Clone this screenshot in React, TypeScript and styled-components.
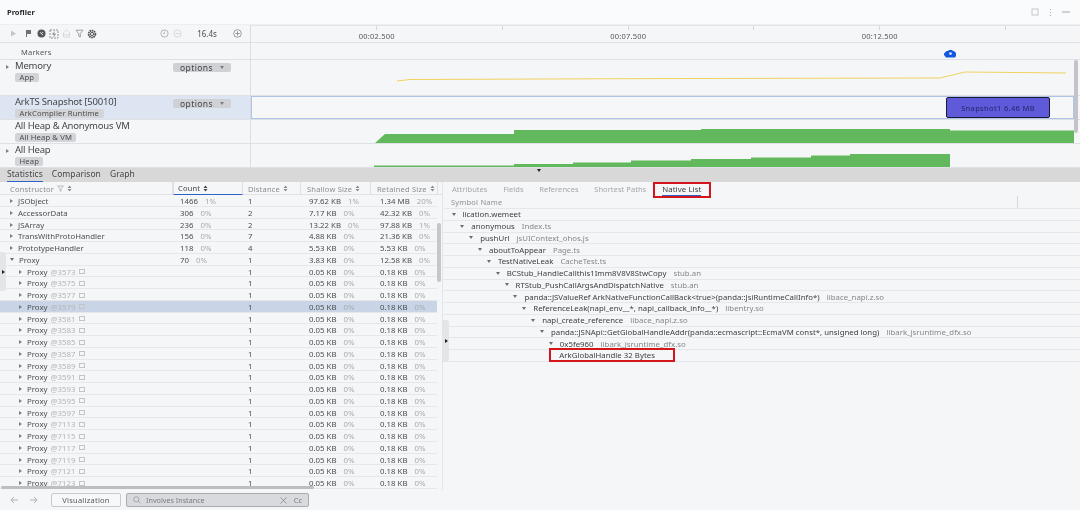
import React from "react";
import styled, { createGlobalStyle } from "styled-components";

const Global = createGlobalStyle`
  html, body { margin: 0; padding: 0; background: #f5f6f8; }
  * { box-sizing: border-box; }
  body { font-family: "Noto Sans", "Liberation Sans", sans-serif; color: #3a3c40; }
`;

const Page = styled.div`
  width: 1080px; height: 510px; overflow: hidden; display: flex; flex-direction: column;
  background: #f5f6f8; position: relative; filter: blur(0.35px);
`;
const TitleBar = styled.div`
  height: 25px; flex: none; display: flex; align-items: center; justify-content: space-between;
  padding: 0 10px 0 7px; background: #fafbfc; border-bottom: 1px solid #eceef0;
`;
const Title = styled.div`font-size: 7.5px; font-weight: 700; color: #26282c; margin-top: -1px;`;
const WindowIcons = styled.div`display: flex; align-items: center; gap: 10px; color: #9a9ca0;`;

const Row = styled.div<{ $h: number; $active?: boolean }>`
  height: ${p => p.$h}px; flex: none; display: flex; border-bottom: 1px solid #dfe0e3;
  ${p => p.$active ? "background: linear-gradient(to right, #dde5f3 250px, #f5f6f8 250px);" : ""}
`;
const LeftCell = styled.div`
  width: 251px; flex: none; border-right: 1px solid #dcdde1; position: relative;
  display: flex; flex-direction: column; align-items: flex-start; padding-left: 15px;
`;
const ToolCell = styled(LeftCell)`flex-direction: row; align-items: center; padding-left: 9px;`;
const ToolGroup = styled.div`display: flex; align-items: center; gap: 3px;`;
const TimeGroup = styled.div`display: flex; align-items: center; margin-left: 63px; color: #a4a6aa;`;
const TimeText = styled.span`font-size: 8px; color: #4a4c50; width: 44px; text-align: center; margin-left: 3px; margin-right: 4px;`;
const Ruler = styled.div`
  flex: 1; display: flex; align-items: flex-end; padding-left: 0;
  background: repeating-linear-gradient(to right, #d4d5d8 0, #d4d5d8 1px, transparent 1px, transparent 125.75px) 125px 0 / auto 4px no-repeat;
  border-top: 1px solid #e3e4e7;
`;
const RulerCell = styled.div`width: 251.5px; flex: none; text-align: center; font-size: 7.5px; letter-spacing: 0.2px; color: #55575b; line-height: 11px;`;
const MarkerLabel = styled.div`font-size: 7.5px; color: #55575b; margin: 4px 0 0 6px; line-height: 11px; letter-spacing: 0.2px;`;
const TrackTitle = styled.div`font-size: 9.5px; line-height: 12px; color: #44464a; letter-spacing: -0.2px; white-space: nowrap;`;
const Badge = styled.span`
  font-size: 7.7px; line-height: 9px; height: 9px; padding: 0 4.5px; background: #d3d4d7; border-radius: 2px;
  color: #4a4c50; letter-spacing: 0.1px; margin-top: 1px; white-space: nowrap;
`;
const OptionsBtn = styled.div`
  position: absolute; left: 173px; top: 3px; width: 58px; height: 9px; border-radius: 2px; background: #cfd1d5;
  display: flex; align-items: center; justify-content: center; gap: 7px;
  font-size: 8.5px; letter-spacing: 0.4px; color: #44464a;
`;
const Expander = styled.span`position: absolute; left: 6px; top: 5px; width: 0; height: 0;
  border-left: 3.5px solid #7d7f83; border-top: 2.5px solid transparent; border-bottom: 2.5px solid transparent;`;
const Caret = styled.span`width: 0; height: 0; border-top: 3px solid #7a7c80; border-left: 2.5px solid transparent; border-right: 2.5px solid transparent;`;
const Canvas = styled.div`flex: 1; position: relative; display: flex; min-width: 0;`;
const MarkerCanvas = styled(Canvas)`justify-content: flex-end; align-items: center; padding: 5px 124px 0 0;`;
const Selection = styled(Canvas)`justify-content: flex-end; padding-right: 23px; margin-right: 6px; border: 1px solid #adc3ea; background: #f6f7f9;`;
const SnapshotBox = styled.div`
  width: 104px; background: #5e5ada; border: 1px solid #1b1b2e; border-radius: 2px;
  font-size: 7.5px; letter-spacing: 0.35px; color: #24246b; display: flex; align-items: center; justify-content: center;
`;
const Chart = styled.svg`width: 829px; flex: none; display: block;`;
const TopScroll = styled.div`position: absolute; left: 1074px; top: 60px; width: 4px; height: 73px; background: #c3c4c7; border-radius: 2px;`;

const TabBar = styled.div`
  height: 14px; flex: none; background: #d8d8d9; display: flex; align-items: flex-end; padding-left: 7px; gap: 9px; position: relative;
`;
const MainTab = styled.div<{ $on?: boolean }>`
  font-size: 8.5px; line-height: 12px; height: 14px; color: #45474b; letter-spacing: 0.05px;
  border-bottom: ${p => p.$on ? "1px solid #2f62c8" : "1px solid transparent"};
`;
const Collapse = styled.span`position: absolute; left: 537px; top: 1px; width: 0; height: 0;
  border-top: 3px solid #222; border-left: 2.5px solid transparent; border-right: 2.5px solid transparent;`;

const Split = styled.div`flex: 1; min-height: 0; display: flex; position: relative;`;
const Left = styled.div`width: 443px; flex: none; display: flex; flex-direction: column; position: relative; overflow: hidden; border-right: 1px solid #e4e5e8;`;
const Right = styled.div`flex: 1; display: flex; flex-direction: column; min-width: 0;`;

const cols = "173px 70px 58px 70px 67px";
const THead = styled.div`
  height: 13px; flex: none; display: grid; grid-template-columns: ${cols}; border-bottom: 1px solid #e1e2e5; background: #f5f6f8;
`;
const TH = styled.div<{ $on?: boolean; $pad: number }>`
  font-size: 7.5px; line-height: 12px; padding-left: ${p => p.$pad}px; letter-spacing: 0.2px;
  color: ${p => p.$on ? "#44464a" : "#8b8d91"}; display: flex; align-items: center; gap: 3px;
  border-right: 1px solid #dfe0e3;
  ${p => p.$on ? "border-bottom: 1px solid #2f62c8; border-left: 1px solid #dfe0e3; height: 13px;" : ""}
`;
const TRow = styled.div<{ $sel?: boolean }>`
  height: 11.75px; flex: none; display: grid; grid-template-columns: ${cols}; width: 437px; align-items: center;
  border-bottom: 1px solid #e6e7ea; background: ${p => p.$sel ? "#c9d5e7" : "transparent"};
  font-size: 7.8px; letter-spacing: 0.02px; color: #4c4e52; white-space: nowrap; padding-top: 1px;
`;
const NameCell = styled.div<{ $level: number }>`padding-left: ${p => 10 + p.$level * 9}px; display: flex; align-items: center; gap: 5px;`;
const Tri = styled.span`width: 0; height: 0; border-left: 3px solid #7d7f83; border-top: 2.2px solid transparent; border-bottom: 2.2px solid transparent; margin-right: 0;`;
const TriDown = styled.span`width: 0; height: 0; border-top: 3px solid #6a6c70; border-left: 2.2px solid transparent; border-right: 2.2px solid transparent;`;
const Id = styled.span`color: #b3b5b9; margin-left: -2px;`;
const Frame = styled.span`width: 6px; height: 5px; border: 1px solid #c2c4c8; border-top-width: 1.5px; margin-left: -2px;`;
const Val = styled.div<{ $pad: number }>`padding-left: ${p => p.$pad}px; display: flex; gap: 7px;`;
const Pct = styled.span`color: #a8aaae;`;
const VScroll = styled.div`position: absolute; left: 437px; top: 41px; width: 4px; height: 59px; border-radius: 2px; background: #c6c7ca;`;
const HScroll = styled.div`position: absolute; left: 1px; top: 304px; width: 313px; height: 3px; border-radius: 2px; background: #bdbec1;`;
const SideHandle = styled.div`position: absolute; width: 6px; height: 39px; background: #e4e5e8; border-radius: 0 3px 3px 0; display: flex; align-items: center; justify-content: center;`;
const LeftHandle = styled(SideHandle)`left: 0; top: 70px;`;
const MidHandle = styled(SideHandle)`left: 443px; top: 138px; height: 42px;`;
const HandleArrow = styled.span`width: 0; height: 0; border-left: 3px solid #1f2023; border-top: 2.2px solid transparent; border-bottom: 2.2px solid transparent;`;

const RTabs = styled.div`height: 14px; flex: none; display: flex; align-items: center; padding-left: 9px; gap: 15.6px;`;
const RTab = styled.div`font-size: 7.5px; letter-spacing: 0.05px; color: #a4a6aa; line-height: 12px;`;
const RTabOn = styled.div`
  width: 58px; height: 16px; border: 2px solid #d4161c; margin-left: -9px; margin-top: 1px;
  display: flex; justify-content: center; font-size: 7.8px; letter-spacing: 0.1px; color: #3c3e42; position: relative; z-index: 1; line-height: 11px;
`;
const TabUnder = styled.span`border-bottom: 1px solid #2f62c8; height: 12px;`;
const SymHead = styled.div`
  height: 13px; flex: none; margin-left: 1px; font-size: 7.5px; color: #8f9195; letter-spacing: 0.2px; padding-left: 7px; display: flex; align-items: center;
  border-bottom: 1px solid #e6e7ea; position: relative; line-height: 11px;
`;
const SymDivider = styled.span`position: absolute; left: 573px; top: 0; height: 12px; width: 1px; background: #d8d9dc;`;
const SRow = styled.div<{ $level: number }>`
  height: 11.75px; flex: none; display: flex; align-items: center; gap: 7px; padding-left: ${p => 8.5 + p.$level * 8.85}px;
  border-bottom: 1px solid #e6e7ea; font-size: 7.8px; letter-spacing: 0.02px; color: #3e4044; white-space: nowrap;
`;
const Lib = styled.span`color: #85878b; margin-left: 0;`;
const Boxed = styled.span`
  border: 2px solid #d4161c; height: 14px; width: 126px; display: flex; align-items: center; padding-left: 8px; margin-left: 0.5px;
  position: relative; z-index: 1; background: #f5f6f8;
`;

const Bottom = styled.div`
  height: 20px; flex: none; display: flex; align-items: center; padding-left: 10px; margin-top: auto; color: #a8aaae; background: #f5f6f8;
`;
const NavIcons = styled.div`display: flex; gap: 12px; margin-right: 13px;`;
const VizBtn = styled.div`
  width: 70px; height: 14px; border: 1px solid #c9cacd; border-radius: 2px; background: #f7f8f9; font-size: 7.5px; letter-spacing: 0.25px;
  color: #55575b; display: flex; align-items: center; justify-content: center;
`;
const Search = styled.div`
  width: 183px; height: 14px; margin-left: 5px; border: 1px solid #a9abae; border-radius: 2px; background: #d9dadd;
  display: flex; align-items: center; padding: 0 6px; font-size: 7.2px; color: #7a7c80; gap: 5px;
`;
const SearchText = styled.span`flex: 1;`;
const CaseToggle = styled.span`margin-left: 2px; font-size: 7.5px;`;

const Ic = styled.svg`display: block; flex: none;`;

const ToolIcons = () => (
  <ToolGroup>
    <Ic width="9" height="9" viewBox="0 0 9 9"><path d="M2 1.5v6l5-3z" fill="#c4c6c9" /></Ic>
    <Ic width="9" height="9" viewBox="0 0 9 9" style={{ marginLeft: 3 }}><path d="M2 1h5v4H3v3H2z" fill="#6e7074" /></Ic>
    <Ic width="9" height="9" viewBox="0 0 9 9" style={{ marginLeft: 1 }}><circle cx="4.5" cy="4.5" r="4" fill="#55575b" /><path d="M3 3.2l3 3M6 3.2l-1 1" stroke="#eee" strokeWidth="1" /></Ic>
    <Ic width="10" height="10" viewBox="0 0 10 10"><path d="M1 1h8v8H1z" fill="none" stroke="#77797d" strokeWidth=".8" strokeDasharray="2 1" /><path d="M3 5h4M5.5 2.5L4 5l2 .5L4.5 8" stroke="#77797d" strokeWidth=".7" fill="none" /></Ic>
    <Ic width="9" height="9" viewBox="0 0 9 9"><path d="M.8 4.5L4.5 1l3.7 3.5M1.5 4v4.2h6V4M1.5 6h6" stroke="#d0d2d5" strokeWidth=".8" fill="none" /></Ic>
    <Ic width="9" height="9" viewBox="0 0 9 9" style={{ marginLeft: 1 }}><path d="M1 1.2h7L5.3 4.6V8L3.7 7.2V4.6z" stroke="#8a8c90" strokeWidth=".8" fill="none" /></Ic>
    <Ic width="10" height="10" viewBox="0 0 10 10"><circle cx="5" cy="5" r="3.4" fill="none" stroke="#505256" strokeWidth="1.8" strokeDasharray="1.6 .6" /><circle cx="5" cy="5" r="1.6" fill="none" stroke="#505256" strokeWidth="1" /></Ic>
  </ToolGroup>
);

const tree: [number, string, string?][] = [
  [0, "lication.wemeet"],
  [1, "anonymous", "Index.ts"],
  [2, "pushUrl", "jsUIContext_ohos.js"],
  [3, "aboutToAppear", "Page.ts"],
  [4, "TestNativeLeak", "CacheTest.ts"],
  [5, "BCStub_HandleCallthis1Imm8V8V8StwCopy", "stub.an"],
  [6, "RTStub_PushCallArgsAndDispatchNative", "stub.an"],
  [7, "panda::JSValueRef ArkNativeFunctionCallBack<true>(panda::JsiRuntimeCallInfo*)", "libace_napi.z.so"],
  [8, "ReferenceLeak(napi_env__*, napi_callback_info__*)", "libentry.so"],
  [9, "napi_create_reference", "libace_napi.z.so"],
  [10, "panda::JSNApi::GetGlobalHandleAddr(panda::ecmascript::EcmaVM const*, unsigned long)", "libark_jsruntime_dfx.so"],
  [11, "0x5fe960", "libark_jsruntime_dfx.so"],
];

const top: [string, string, string, string, string, string, string, string, string][] = [
  ["JSObject", "1466", "1%", "1", "97.62 KB", "1%", "1.34 MB", "20%", ""],
  ["AccessorData", "306", "0%", "2", "7.17 KB", "0%", "42.32 KB", "0%", ""],
  ["JSArray", "236", "0%", "2", "13.22 KB", "0%", "97.88 KB", "1%", ""],
  ["TransWithProtoHandler", "156", "0%", "7", "4.88 KB", "0%", "21.36 KB", "0%", ""],
  ["PrototypeHandler", "118", "0%", "4", "5.53 KB", "0%", "5.53 KB", "0%", ""],
  ["Proxy", "70", "0%", "1", "3.83 KB", "0%", "12.58 KB", "0%", "open"],
];
const ids = [3573, 3575, 3577, 3579, 3581, 3583, 3585, 3587, 3589, 3591, 3593, 3595, 3597, 7113, 7115, 7117, 7119, 7121, 7123];

const Sort = () => (
  <Ic width="5" height="7" viewBox="0 0 5 7"><path d="M2.5 .5L4.5 3H.5zM2.5 6.5L.5 4h4z" fill="currentColor" /></Ic>
);

export default function App() {
  return (
    <Page>
      <Global />
      <TitleBar>
        <Title>Profiler</Title>
        <WindowIcons>
          <Ic width="8" height="8" viewBox="0 0 8 8"><rect x="1" y="1" width="6" height="6" fill="none" stroke="#c4c6c9" /></Ic>
          <Ic width="3" height="9" viewBox="0 0 3 9"><path d="M1.5 1v.8M1.5 4v.8M1.5 7v.8" stroke="#9a9ca0" strokeWidth="1.1" /></Ic>
          <Ic width="8" height="8" viewBox="0 0 8 8"><path d="M0 4h8" stroke="#a4a6aa" /></Ic>
        </WindowIcons>
      </TitleBar>

      <Row $h={18}>
        <ToolCell>
          <ToolIcons />
          <TimeGroup>
            <Ic width="9" height="9" viewBox="0 0 9 9"><circle cx="4.5" cy="4.5" r="3.6" fill="none" stroke="#a4a6aa" strokeWidth=".8" /><path d="M4.5 2.5v2h-1.5" stroke="#a4a6aa" strokeWidth=".7" fill="none" /></Ic>
            <Ic width="9" height="9" viewBox="0 0 9 9" style={{ marginLeft: 4 }}><circle cx="4.5" cy="4.5" r="3.6" fill="none" stroke="#cfd1d4" strokeWidth=".8" /><path d="M2.5 4.5h4" stroke="#cfd1d4" strokeWidth=".8" /></Ic>
            <TimeText>16.4s</TimeText>
            <Ic width="9" height="9" viewBox="0 0 9 9"><circle cx="4.5" cy="4.5" r="3.8" fill="none" stroke="#85878b" strokeWidth=".8" /><path d="M2.3 4.5h4.4M4.5 2.3v4.4" stroke="#85878b" strokeWidth=".8" /></Ic>
          </TimeGroup>
        </ToolCell>
        <Ruler>
          <RulerCell>00:02.500</RulerCell>
          <RulerCell>00:07.500</RulerCell>
          <RulerCell>00:12.500</RulerCell>
        </Ruler>
      </Row>

      <Row $h={17}>
        <LeftCell><MarkerLabel>Markers</MarkerLabel></LeftCell>
        <MarkerCanvas>
          <Ic width="12" height="8" viewBox="0 0 12 8"><path d="M0 3.5L2.5 1h1.5l1-1h3l1 1h1L12 3v3l-1 1.5H2L0 5z" fill="#1558e0" /><circle cx="6.5" cy="3.6" r="1.4" fill="#cfe0fb" /></Ic>
        </MarkerCanvas>
      </Row>

      <Row $h={36}>
        <LeftCell>
          <Expander />
          <TrackTitle>Memory</TrackTitle>
          <Badge>App</Badge>
          <OptionsBtn>options <Caret /></OptionsBtn>
        </LeftCell>
        <Canvas>
          <Chart height="35" viewBox="0 0 829 35">
            <path d="M146 21L159 19.5L400 18.6L689 18L714 12L815 13" fill="none" stroke="#f0d25e" strokeWidth="1" />
          </Chart>
        </Canvas>
      </Row>

      <Row $h={24} $active>
        <LeftCell>
          <TrackTitle>ArkTS Snapshot [50010]</TrackTitle>
          <Badge>ArkCompiler Runtime</Badge>
          <OptionsBtn>options <Caret /></OptionsBtn>
        </LeftCell>
        <Selection>
          <SnapshotBox>Snapshot1 6.46 MB</SnapshotBox>
        </Selection>
      </Row>

      <Row $h={24}>
        <LeftCell>
          <TrackTitle>All Heap &amp; Anonymous VM</TrackTitle>
          <Badge>All Heap &amp; VM</Badge>
        </LeftCell>
        <Canvas>
          <Chart height="23" viewBox="0 0 829 23">
            <path d="M124 23L134 14H263V10H450V9H699V10.5H823V23z" fill="#62b85c" />
          </Chart>
        </Canvas>
      </Row>

      <Row $h={24}>
        <LeftCell>
          <Expander />
          <TrackTitle>All Heap</TrackTitle>
          <Badge>Heap</Badge>
        </LeftCell>
        <Canvas>
          <Chart height="23" viewBox="0 0 829 23">
            <path d="M123 23V21.5H263V20H322V18.5H380V16.5H440V15H500V13.5H560V11.5H599V10H699V23z" fill="#62b85c" />
          </Chart>
        </Canvas>
      </Row>

      <TabBar>
        <MainTab $on>Statistics</MainTab>
        <MainTab>Comparison</MainTab>
        <MainTab>Graph</MainTab>
        <Collapse />
      </TabBar>

      <Split>
        <Left>
          <THead>
            <TH $pad={10}>Constructor
              <Ic width="7" height="7" viewBox="0 0 7 7"><path d="M.5 1h6L4 3.6V6.4L3 5.8V3.6z" fill="none" stroke="#9a9ca0" strokeWidth=".6" /></Ic>
              <Sort />
            </TH>
            <TH $pad={4} $on>Count <Sort /></TH>
            <TH $pad={5}>Distance <Sort /></TH>
            <TH $pad={6}>Shallow Size <Sort /></TH>
            <TH $pad={6}>Retained Size <Sort /></TH>
          </THead>
          {top.map(r => (
            <TRow key={r[0]}>
              <NameCell $level={0}>{r[8] ? <TriDown /> : <Tri />}{r[0]}</NameCell>
              <Val $pad={7}>{r[1]} <Pct>{r[2]}</Pct></Val>
              <Val $pad={5}>{r[3]}</Val>
              <Val $pad={8}>{r[4]} <Pct>{r[5]}</Pct></Val>
              <Val $pad={9}>{r[6]} <Pct>{r[7]}</Pct></Val>
            </TRow>
          ))}
          {ids.map(id => (
            <TRow key={id} $sel={id === 3579}>
              <NameCell $level={1}><Tri />Proxy <Id>@{id}</Id><Frame /></NameCell>
              <div />
              <Val $pad={5}>1</Val>
              <Val $pad={8}>0.05 KB <Pct>0%</Pct></Val>
              <Val $pad={9}>0.18 KB <Pct>0%</Pct></Val>
            </TRow>
          ))}
          <VScroll />
          <HScroll />
          <LeftHandle><HandleArrow /></LeftHandle>
        </Left>
        <MidHandle><HandleArrow /></MidHandle>
        <Right>
          <RTabs>
            <RTab>Attributes</RTab>
            <RTab>Fields</RTab>
            <RTab>References</RTab>
            <RTab>Shortest Paths</RTab>
            <RTabOn><TabUnder>Native List</TabUnder></RTabOn>
          </RTabs>
          <SymHead>Symbol Name<SymDivider /></SymHead>
          {tree.map(([lvl, name, lib]) => (
            <SRow key={name} $level={lvl}>
              <TriDown />{name}{lib ? <Lib>{lib}</Lib> : null}
            </SRow>
          ))}
          <SRow $level={11}><Boxed>ArkGlobalHandle 32 Bytes</Boxed></SRow>
        </Right>
      </Split>

      <Bottom>
        <NavIcons>
          <Ic width="8" height="8" viewBox="0 0 8 8"><path d="M8 4H1M4 1L1 4l3 3" fill="none" stroke="#b0b2b6" /></Ic>
          <Ic width="8" height="8" viewBox="0 0 8 8"><path d="M0 4h7M4 1l3 3-3 3" fill="none" stroke="#b0b2b6" /></Ic>
        </NavIcons>
        <VizBtn>Visualization</VizBtn>
        <Search>
          <Ic width="8" height="8" viewBox="0 0 8 8"><circle cx="3.3" cy="3.3" r="2.6" fill="none" stroke="#8f9195" strokeWidth=".7" /><path d="M5.2 5.2L7.5 7.5" stroke="#8f9195" strokeWidth=".7" /></Ic>
          <SearchText>Involves Instance</SearchText>
          <Ic width="7" height="7" viewBox="0 0 7 7"><path d="M.5.5l6 6M6.5.5l-6 6" stroke="#77797d" strokeWidth=".7" /></Ic>
          <CaseToggle>Cc</CaseToggle>
        </Search>
      </Bottom>
      <TopScroll />
    </Page>
  );
}
